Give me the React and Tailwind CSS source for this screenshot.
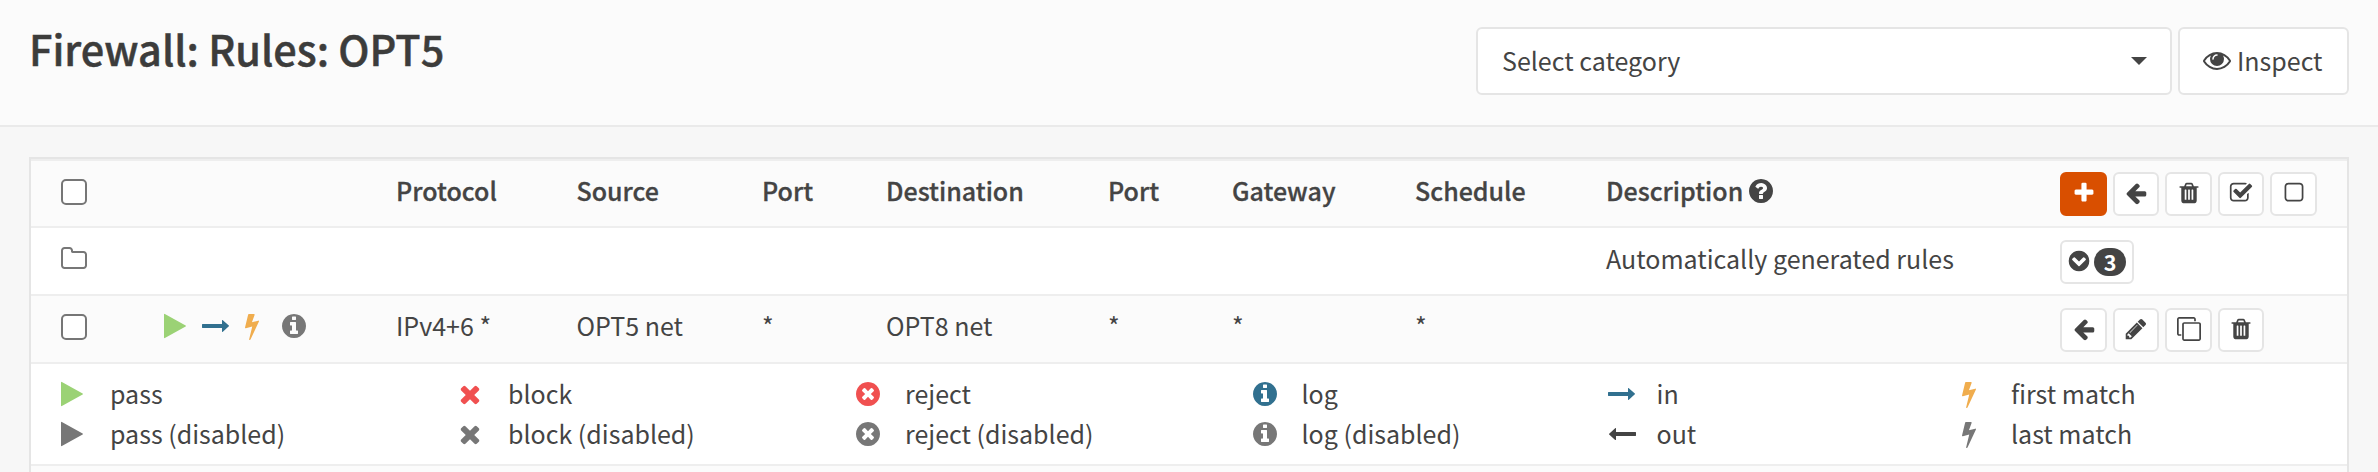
import React from "react";

const DISC =
  "M1664 896q0 209-103 385.5t-279.5 279.5-385.5 103-385.5-103-279.5-279.5-103-385.5 103-385.5 279.5-279.5 385.5-103 385.5 103 279.5 279.5 103 385.5z";

const PATHS = {
  plus: "M1600 736v192q0 40-28 68t-68 28h-416v416q0 40-28 68t-68 28h-192q-40 0-68-28t-28-68v-416h-416q-40 0-68-28t-28-68v-192q0-40 28-68t68-28h416v-416q0-40 28-68t68-28h192q40 0 68 28t28 68v416h416q40 0 68 28t28 68z",
  arrowLeft:
    "M1664 896v128q0 53-32.5 90.5t-84.5 37.5h-704l293 294q38 36 38 90t-38 90l-75 76q-37 37-90 37-52 0-91-37l-651-652q-37-37-37-90 0-52 37-91l651-650q38-38 91-38 52 0 90 38l75 74q38 38 38 91t-38 91l-293 293h704q52 0 84.5 37.5t32.5 90.5z",
  trash:
    "M704 1376v-704q0-14-9-23t-23-9h-64q-14 0-23 9t-9 23v704q0 14 9 23t23 9h64q14 0 23-9t9-23zm256 0v-704q0-14-9-23t-23-9h-64q-14 0-23 9t-9 23v704q0 14 9 23t23 9h64q14 0 23-9t9-23zm256 0v-704q0-14-9-23t-23-9h-64q-14 0-23 9t-9 23v704q0 14 9 23t23 9h64q14 0 23-9t9-23zm-544-992h448l-48-117q-7-9-17-11h-317q-10 2-17 11zm928 32v64q0 14-9 23t-23 9h-96v948q0 83-47 143.5t-113 60.5h-832q-66 0-113-58.5t-47-141.5v-952h-96q-14 0-23-9t-9-23v-64q0-14 9-23t23-9h309l70-167q15-37 54-63t79-26h320q40 0 79 26t54 63l70 167h309q14 0 23 9t9 23z",
  checkSquare:
    "M1472 930v318q0 119-84.5 203.5t-203.5 84.5h-832q-119 0-203.5-84.5t-84.5-203.5v-832q0-119 84.5-203.5t203.5-84.5h832q63 0 117 25 15 7 18 23 3 17-9 29l-49 49q-10 10-23 10-3 0-9-2-23-6-45-6h-832q-66 0-113 47t-47 113v832q0 66 47 113t113 47h832q66 0 113-47t47-113v-254q0-13 9-22l64-64q10-10 23-10 6 0 12 3 20 8 20 29zm231-489l-814 814q-24 24-57 24t-57-24l-430-430q-24-24-24-57t24-57l110-110q24-24 57-24t57 24l263 263 647-647q24-24 57-24t57 24l110 110q24 24 24 57t-24 57z",
  square:
    "M1312 256h-832q-66 0-113 47t-47 113v832q0 66 47 113t113 47h832q66 0 113-47t47-113v-832q0-66-47-113t-113-47zm288 160v832q0 119-84.5 203.5t-203.5 84.5h-832q-119 0-203.5-84.5t-84.5-203.5v-832q0-119 84.5-203.5t203.5-84.5h832q119 0 203.5 84.5t84.5 203.5z",
  chevronCircle:
    "M941 1273l454-454q19-19 19-45t-19-45l-102-102q-19-19-45-19t-45 19l-307 307-307-307q-19-19-45-19t-45 19l-102 102q-19 19-19 45t19 45l454 454q19 19 45 19t45-19z" +
    DISC,
  pencil:
    "M491 1536l91-91-235-235-91 91v107h128v128h107zm523-928q0-22-22-22-10 0-17 7l-542 542q-7 7-7 17 0 22 22 22 10 0 17-7l542-542q7-7 7-17zm-54-192l416 416-832 832h-416v-416zm683 96q0 53-37 90l-166 166-416-416 166-165q36-38 90-38 53 0 91 38l235 234q37 39 37 91z",
  clone:
    "M1664 1632v-1088q0-13-9.5-22.5t-22.5-9.5h-1088q-13 0-22.5 9.5t-9.5 22.5v1088q0 13 9.5 22.5t22.5 9.5h1088q13 0 22.5-9.5t9.5-22.5zm128-1088v1088q0 66-47 113t-113 47h-1088q-66 0-113-47t-47-113v-1088q0-66 47-113t113-47h1088q66 0 113 47t47 113zm-384-384v160h-128v-160q0-13-9.5-22.5t-22.5-9.5h-1088q-13 0-22.5 9.5t-9.5 22.5v1088q0 13 9.5 22.5t22.5 9.5h160v128h-160q-66 0-113-47t-47-113v-1088q0-66 47-113t113-47h1088q66 0 113 47t47 113z",
  eye: "M1664 960q-152-236-381-353 61 104 61 225 0 185-131.5 316.5t-316.5 131.5-316.5-131.5-131.5-316.5q0-121 61-225-229 117-381 353 133 205 333.5 326.5t434.5 121.5 434.5-121.5 333.5-326.5zm-720-384q0-20-14-34t-34-14q-125 0-214.5 89.5t-89.5 214.5q0 20 14 34t34 14 34-14 14-34q0-86 61-147t147-61q20 0 34-14t14-34zm848 384q0 34-20 69-140 230-376.5 368.5t-499.5 138.5-499.5-139-376.5-368q-20-35-20-69t20-69q140-229 376.5-368t499.5-139 499.5 139 376.5 368q20 35 20 69z",
  play: "M1576 927l-1328 738q-23 13-39.5 3t-16.5-36v-1472q0-26 16.5-36t39.5 3l1328 738q23 13 23 31t-23 31z",
  right:
    "M1728 893q0 14-10 24l-384 354q-16 14-35 6-19-9-19-29v-224h-1248q-14 0-23-9t-9-23v-192q0-14 9-23t23-9h1248v-224q0-21 19-29t35 5l384 350q10 10 10 23z",
  left: "M1792 800v192q0 14-9 23t-23 9h-1248v224q0 21-19 29t-35-5l-384-350q-10-10-10-23 0-14 10-24l384-354q16-14 35-6 19 9 19 29v224h1248q14 0 23 9t9 23z",
  bolt: "M1333 566q18 20 7 44l-540 1157q-13 25-42 25-4 0-14-2-17-5-25.5-19t-4.5-30l197-808-406 101q-4 1-12 1-18 0-31-11-18-15-13-39l201-825q4-14 16-23t28-9h328q19 0 32 12.5t13 29.5q0 8-5 18l-171 463 396-98q8-2 12-2 19 0 34 15z",
  info:
    "M1152 1376v-160q0-14-9-23t-23-9h-96v-512q0-14-9-23t-23-9h-320q-14 0-23 9t-9 23v160q0 14 9 23t23 9h96v320h-96q-14 0-23 9t-9 23v160q0 14 9 23t23 9h448q14 0 23-9t9-23zm-128-896v-160q0-14-9-23t-23-9h-192q-14 0-23 9t-9 23v160q0 14 9 23t23 9h192q14 0 23-9t9-23z" +
    DISC,
  times:
    "M1490 1322q0 40-28 68l-136 136q-28 28-68 28t-68-28l-294-294-294 294q-28 28-68 28t-68-28l-136-136q-28-28-28-68t28-68l294-294-294-294q-28-28-28-68t28-68l136-136q28-28 68-28t68 28l294 294 294-294q28-28 68-28t68 28l136 136q28 28 28 68t-28 68l-294 294 294 294q28 28 28 68z",
  timesCircle:
    "M1277 1122q0-26-19-45l-181-181 181-181q19-19 19-45 0-27-19-46l-90-90q-19-19-46-19-26 0-45 19l-181 181-181-181q-19-19-45-19-27 0-46 19l-90 90q-19 19-19 46 0 26 19 45l181 181-181 181q-19 19-19 45 0 27 19 46l90 90q19 19 46 19 26 0 45-19l181-181 181 181q19 19 45 19 27 0 46-19l90-90q19-19 19-46z" +
    DISC,
  folder:
    "M1600 1312v-704q0-40-28-68t-68-28h-704q-40 0-68-28t-28-68v-64q0-40-28-68t-68-28h-320q-40 0-68 28t-28 68v960q0 40 28 68t68 28h1216q40 0 68-28t28-68zm128-704v704q0 92-66 158t-158 66h-1216q-92 0-158-66t-66-158v-960q0-92 66-158t158-66h320q92 0 158 66t66 158v32h672q92 0 158 66t66 158z",
  question:
    "M1024 1376v-192q0-14-9-23t-23-9h-192q-14 0-23 9t-9 23v192q0 14 9 23t23 9h192q14 0 23-9t9-23zm256-672q0-88-55.5-163t-138.5-116-170-41q-243 0-371 213-15 24 8 42l132 100q7 6 19 6 16 0 25-12 53-68 86-92 34-24 86-24 48 0 85.5 26t37.5 59q0 38-20 61t-68 45q-63 28-115.5 86.5t-52.5 125.5v36q0 14 9 23t23 9h192q14 0 23-9t9-23q0-19 21.5-49.5t54.5-49.5q32-18 49-28.5t46-35 44.5-48 28-60.5 12.5-81z" +
    DISC,
};

function Icon({ name, className = "" }) {
  return (
    <svg viewBox="0 0 1792 1792" fill="currentColor" fillRule="evenodd" className={`block shrink-0 ${className}`}>
      <path d={PATHS[name]} />
    </svg>
  );
}

const ROW = "grid grid-cols-[99px_236px_180.5px_185.5px_124px_222px_124px_183px_191px_454.2px_1fr] pl-[30px]";

function Checkbox() {
  return <span className="block size-[26px] rounded-[5px] border-2 border-[#767676] bg-white" />;
}

function Action({ name, primary }) {
  return (
    <button
      className={`flex h-11 w-[46.8px] justify-center rounded-md border-2 pt-[7.3px] ${
        primary ? "border-[#d94f00] bg-[#d94f00] text-white" : "border-[#e5e5e5] bg-white"
      }`}
    >
      <Icon name={name} className="size-6" />
    </button>
  );
}

function Legend({ icon, color, label, gap }) {
  return (
    <div className="flex h-10">
      <Icon name={icon} className={`size-7 ${color}`} />
      <span className={`-mt-px whitespace-nowrap leading-7 ${gap}`}>{label}</span>
    </div>
  );
}

const LEGEND = [
  { gap: "ml-[24px]", items: [["play", "text-[#9bd275]", "pass"], ["play", "text-[#777777]", "pass (disabled)"]] },
  { gap: "ml-[24.5px]", items: [["times", "text-[#f05050]", "block"], ["times", "text-[#777777]", "block (disabled)"]] },
  { gap: "ml-[23.5px]", items: [["timesCircle", "text-[#f05050]", "reject"], ["timesCircle", "text-[#777777]", "reject (disabled)"]] },
  { gap: "ml-[22.5px]", items: [["info", "text-[#31708f]", "log"], ["info", "text-[#777777]", "log (disabled)"]] },
  { gap: "ml-[20.5px]", items: [["right", "text-[#31708f]", "in"], ["left", "text-[#444444]", "out"]] },
  { gap: "ml-[28px]", items: [["bolt", "text-[#f0ad4e]", "first match"], ["bolt", "text-[#777777]", "last match"]] },
];

export default function App() {
  return (
    <div className="h-[472px] overflow-hidden bg-[#f7f7f7] font-['Noto_Sans_CJK_SC','Noto_Sans',sans-serif] text-[25px] text-[#444444]">
      <header className="flex h-[127px] items-start border-b-2 border-[#eaeaea] bg-[#fbfbfb] pr-[29px] pl-[29px]">
        <h1 className="mt-[22px] text-[41.4px] leading-[52px] font-medium text-[#3c3c3b] [-webkit-text-stroke:0.5px_#3c3c3b]">Firewall: Rules: OPT5</h1>
        <button className="mt-[27px] ml-auto flex h-[68px] w-[695.5px] items-center justify-between rounded-md border-2 border-[#e5e5e5] bg-white pr-[23px] pl-6">
          <span className="-mt-0.5 leading-7">Select category</span>
          <svg viewBox="0 0 16 8" className="h-2 w-4" fill="currentColor">
            <path d="M0 0h16L8 8z" />
          </svg>
        </button>
        <button className="mt-[27px] ml-[6.5px] flex h-[68px] w-[171px] rounded-md border-2 border-[#e5e5e5] bg-white pt-[18px] pl-[23px]">
          <Icon name="eye" className="-mt-px size-7" />
          <span className="-mt-px ml-1.5 leading-7">Inspect</span>
        </button>
      </header>

      <main className="mt-[30px] mr-[29px] ml-[29px] h-[400px] border-2 border-[#e5e5e5] bg-[#fbfbfb]">
        <div className={`${ROW} h-[69px] border-t-2 border-b-2 border-[#eeeeee] font-medium [-webkit-text-stroke:0.3px_#444444]`}>
          <div className="pt-[18px]"><Checkbox /></div>
          <div />
          <span className="pt-[13px] leading-8">Protocol</span>
          <span className="pt-[13px] leading-8">Source</span>
          <span className="pt-[13px] leading-8">Port</span>
          <span className="pt-[13px] leading-8">Destination</span>
          <span className="pt-[13px] leading-8">Port</span>
          <span className="pt-[13px] leading-8">Gateway</span>
          <span className="pt-[13px] leading-8">Schedule</span>
          <div className="flex pt-[13px] leading-8">
            Description
            <Icon name="question" className="mt-[3px] ml-1 size-7" />
          </div>
          <div className="flex gap-[5.7px] pt-[11px]">
            <Action name="plus" primary />
            <Action name="arrowLeft" />
            <Action name="trash" />
            <Action name="checkSquare" />
            <Action name="square" />
          </div>
        </div>

        <div className={`${ROW} h-[68px] border-b-2 border-[#eeeeee] bg-white`}>
          <Icon name="folder" className="mt-[17px] -ml-px size-7 text-[#777777]" />
          <span className="col-start-10 pt-[14px] leading-8">Automatically generated rules</span>
          <div className="pt-3">
            <button className="flex h-11 w-[74px] rounded-md border-2 border-[#e5e5e5] bg-white pl-[4.5px]">
              <Icon name="chevronCircle" className="mt-[7.3px] size-6" />
              <span className="mt-1.5 ml-[3.5px] flex h-7 w-8 items-center justify-center rounded-[14px] bg-[#444444] text-[21.6px] leading-7 font-bold text-white">3</span>
            </button>
          </div>
        </div>

        <div className={`${ROW} h-[68px] border-b-2 border-[#eeeeee]`}>
          <div className="pt-[18px]"><Checkbox /></div>
          <div className="flex pt-4 pl-px">
            <Icon name="play" className="size-7 text-[#9bd275]" />
            <Icon name="right" className="ml-[13px] size-7 text-[#31708f]" />
            <Icon name="bolt" className="ml-2 size-7 text-[#f0ad4e]" />
            <Icon name="info" className="ml-3.5 size-7 text-[#777777]" />
          </div>
          <span className="pt-[13px] leading-8">IPv4+6 *</span>
          <span className="pt-[13px] leading-8">OPT5 net</span>
          <span className="pt-[13px] leading-8">*</span>
          <span className="pt-[13px] leading-8">OPT8 net</span>
          <span className="pt-[13px] leading-8">*</span>
          <span className="pt-[13px] leading-8">*</span>
          <span className="pt-[13px] leading-8">*</span>
          <div />
          <div className="flex gap-[5.7px] pt-3">
            <Action name="arrowLeft" />
            <Action name="pencil" />
            <Action name="clone" />
            <Action name="trash" />
          </div>
        </div>

        <div className="grid h-[102px] grid-cols-[397.5px_398px_397.5px_357px_347px_1fr] border-b-2 border-[#eeeeee] bg-white pt-4 pl-[27px]">
          {LEGEND.map(({ gap, items }) => (
            <div key={items[0][2]}>
              {items.map(([icon, color, label]) => (
                <Legend key={label} icon={icon} color={color} label={label} gap={gap} />
              ))}
            </div>
          ))}
        </div>
      </main>
    </div>
  );
}
